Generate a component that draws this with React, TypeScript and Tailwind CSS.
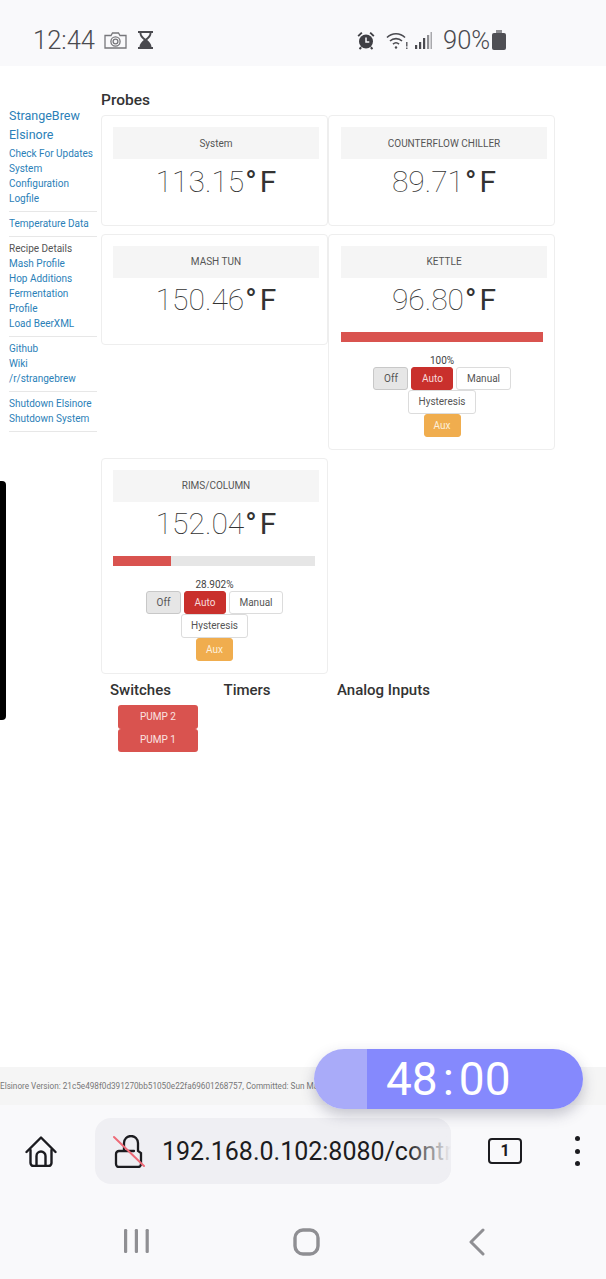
import React from 'react';

const linkClass = 'block text-[#2b7fb8]';

const navGroups = [
  ['Check For Updates', 'System', 'Configuration', 'Logfile'],
  ['Temperature Data'],
  ['Recipe Details', 'Mash Profile', 'Hop Additions', 'Fermentation', 'Profile', 'Load BeerXML'],
  ['Github', 'Wiki', '/r/strangebrew'],
  ['Shutdown Elsinore', 'Shutdown System'],
];

const Sidebar = () => (
  <aside className="w-[88px] ml-[9px] pt-[40px] shrink-0 text-[10px] leading-[15px] whitespace-nowrap">
    <div className="text-[12.5px] leading-[19px] text-[#2b7fb8] mb-[2px]">
      <div>StrangeBrew</div>
      <div>Elsinore</div>
    </div>
    {navGroups.map((group, i) => (
      <div key={i} className={`border-b border-[#e7e7e7] ${i === 0 ? 'pt-0 pb-[4.5px]' : 'py-[4.5px]'}`}>
        {group.map((item) =>
          item === 'Recipe Details' ? (
            <div key={item} className="text-[#555]">{item}</div>
          ) : (
            <a key={item} className={linkClass}>{item}</a>
          )
        )}
      </div>
    ))}
  </aside>
);

const Btn = ({ label, kind }: { label: string; kind: 'off' | 'auto' | 'plain' | 'aux' }) => {
  const styles = {
    off: 'bg-[#e6e6e6] border-[#c8c8c8] text-[#555] w-[35px]',
    auto: 'bg-[#c9302c] border-[#c9302c] text-[#f7dcdc] w-[42px]',
    plain: 'bg-white border-[#dcdcdc] text-[#555] px-[9.5px]',
    aux: 'bg-[#f0ad4e] border-[#f0ad4e] text-[#fdf0dc] w-[37px]',
  };
  return (
    <span className={`h-[23.5px] flex items-center justify-center border rounded-[3px] text-[10px] ${styles[kind]}`}>
      {label}
    </span>
  );
};

const ProbeCard = ({ name, temp, pct, label, right }: { name: string; temp: string; pct?: number; label?: string; right?: boolean }) => (
  <div className={`border border-[#eeeeee] rounded-[4px] pt-[11px] pb-[12px] self-start min-h-[111px] bg-white ${right ? 'pl-[12px] pr-[7px]' : 'pl-[11px] pr-[8px]'}`}>
    <div className="h-[32px] bg-[#f5f5f5] flex items-center justify-center text-[10px] text-[#555]">{name}</div>
    <div className="h-[42px] pt-[3px] flex items-center justify-center text-[30px] text-[#333] leading-none">
      <span className="font-thin">{temp}</span>
      <span className="font-medium ml-[1px]">°</span>
      <span className="font-normal ml-[3px]">F</span>
    </div>
    {pct !== undefined && (
      <div className={`mt-[12px] ${right ? 'w-[202px]' : 'w-[203px]'}`}>
        <div className="w-[202px] h-[10px] bg-[#e6e6e6]">
          <div className="h-full bg-[#d9534f]" style={{ width: `${pct}%` }} />
        </div>
        <div className="mt-[13px] text-center text-[10px] leading-[12px] text-[#444]">{label}</div>
        <div className="flex flex-wrap justify-center gap-x-[3px]">
          <Btn label="Off" kind="off" />
          <Btn label="Auto" kind="auto" />
          <Btn label="Manual" kind="plain" />
          <Btn label="Hysteresis" kind="plain" />
          <div className="w-full flex justify-center">
            <Btn label="Aux" kind="aux" />
          </div>
        </div>
      </div>
    )}
  </div>
);

const Main = () => (
  <main className="ml-[4px] w-[455px] text-[#333]">
    <h3 className="h-[49px] pt-[24px] text-[15.5px] leading-[20px] font-medium">Probes</h3>
    <div className="grid grid-cols-[227px_227px] gap-y-[7.5px]">
      <ProbeCard name="System" temp="113.15" />
      <ProbeCard name="COUNTERFLOW CHILLER" temp="89.71" right />
      <ProbeCard name="MASH TUN" temp="150.46" />
      <ProbeCard name="KETTLE" temp="96.80" pct={100} label="100%" right />
      <ProbeCard name="RIMS/COLUMN" temp="152.04" pct={28.902} label="28.902%" />
    </div>
    <div className="flex pl-[9px] pt-[6px] text-[15px] leading-[20px] font-medium">
      <div className="w-[113.5px]">
        <h4>Switches</h4>
        <div className="ml-[8px] mt-[5px] w-[80px]">
          <div className="h-[23.5px] flex items-center justify-center rounded-[3px] bg-[#d9534f] text-[10px] font-normal text-[#fbe3e2]">PUMP 2</div>
          <div className="h-[23.5px] flex items-center justify-center rounded-[3px] bg-[#d9534f] text-[10px] font-normal text-[#fbe3e2]">PUMP 1</div>
        </div>
      </div>
      <h4 className="w-[113.5px]">Timers</h4>
      <h4>Analog Inputs</h4>
    </div>
  </main>
);

const StatusBar = () => (
  <div className="h-[66px] shrink-0 bg-[#f9f9fb] pl-[33px] pr-[100px] pt-[24px] flex justify-between items-start text-[#4a4a4f]">
    <div className="flex items-center h-[32px]">
      <span className="text-[25.5px] font-light leading-none w-[71px] mt-[1px]">12:44</span>
      <svg width="23" height="17" viewBox="0 0 23 17" fill="none" stroke="#77777b" strokeWidth="1.3">
        <path d="M1 3.500h6L8.500 1h6L16 3.500h6V16H1z" />
        <circle cx="11.500" cy="9.500" r="4.600" />
        <circle cx="11.500" cy="9.500" r="2.400" />
      </svg>
      <svg className="ml-[11px]" width="15" height="18" viewBox="0 0 15 18" fill="#4a4a4f">
        <path d="M0 0h15v2h-1.500c0 3-2 5-4.300 7 2.300 2 4.300 4 4.300 7H15v2H0v-2h1.500c0-3 2-5 4.300-7-2.300-2-4.300-4-4.300-7H0zm3.400 2c0 2.400 1.900 4 4.100 5.800C9.700 6 11.600 4.400 11.600 2z" />
      </svg>
    </div>
    <div className="flex items-center h-[32px]">
      <svg width="18" height="19" viewBox="0 0 18 19" fill="#3f3f44">
        <circle cx="9" cy="10.500" r="7" />
        <path d="M0.500 4.500 4.200 1l1.300 1.300-3.700 3.500zM17.500 4.500 13.800 1l-1.300 1.300 3.700 3.500zM3.200 15.500l1.800 1.400-1.800 1.800-1.300-1.300zM14.800 15.500 13 16.900l1.800 1.800 1.300-1.300z" />
        <path d="M9 6.500v4.500h3.300" stroke="#f9f9fb" strokeWidth="1.500" fill="none" />
      </svg>
      <svg className="ml-[11px]" width="22" height="19" viewBox="0 0 22 19" fill="none" stroke="#4a4a4f" strokeWidth="1.600">
        <path d="M1 6.500C6 1.500 14 1.500 19 6.500" />
        <path d="M4 10c3.200-3.200 8.800-3.200 12 0" />
        <path d="M7 13.200c1.800-1.700 4.200-1.700 6 0" />
        <circle cx="10" cy="16.500" r="1.200" fill="#4a4a4f" stroke="none" />
        <path d="M20.800 11v4.500M20.800 16.500V18" strokeWidth="1.300" />
      </svg>
      <svg className="ml-[7px]" width="17" height="19" viewBox="0 0 17 19" fill="#4a4a4f">
        <rect x="0" y="14" width="2.200" height="4" />
        <rect x="4" y="11" width="2.200" height="7" />
        <rect x="8" y="7" width="2.200" height="11" />
        <rect x="12" y="4" width="2.200" height="14" fill="#8f8f93" />
        <rect x="15.500" y="1" width="1.500" height="17" fill="#a8a8ac" />
      </svg>
      <span className="ml-[11px] w-[45px] text-[25.5px] font-light leading-none mt-[1px]">90%</span>
      <svg className="ml-[4px]" width="14" height="20" viewBox="0 0 14 20" fill="#4f4f54">
        <rect x="4" y="0" width="6" height="3" fill="#8f8f93" />
        <rect x="0" y="3" width="14" height="17" rx="2" />
      </svg>
    </div>
  </div>
);

const BrowserBar = () => (
  <div className="h-[174px] shrink-0 bg-[#f9f9fb]">
    <div className="h-[92px] flex items-start pt-[13px]">
      <div className="w-[95px] shrink-0 h-[66px] flex items-center pl-[25px]">
        <svg width="32" height="31" viewBox="0 0 32 31" fill="none" stroke="#1c1c20" strokeWidth="2.400" strokeLinejoin="round" strokeLinecap="round">
          <path d="M1.500 16 16 1.500 30.500 16" />
          <path d="M5.500 14v13a3 3 0 0 0 3 3h15a3 3 0 0 0 3-3V14" />
          <path d="M11.500 30V20a4.500 4.500 0 0 1 9 0v10" />
        </svg>
      </div>
      <div className="w-[356px] shrink-0 h-[66px] rounded-[16px] bg-[#efeff3] flex items-center pl-[18px] overflow-hidden relative">
        <svg className="shrink-0" width="33" height="33" viewBox="0 0 33 33" fill="none" stroke="#1c1c20" strokeWidth="2.300" strokeLinecap="round">
          <path d="M11 16V8a7 7 0 0 1 14 0v8l3 2v11a3 3 0 0 1-3 3H6a3 3 0 0 1-3-3V19a3 3 0 0 1 3-3h15" />
          <path d="M1 2l30 29" stroke="#ee6b78" strokeWidth="2" />
        </svg>
        <span className="ml-[16px] mt-[1px] text-[25px] whitespace-nowrap text-[#1c1c20] leading-none">192.168.0.102:8080/contr</span>
        <div className="absolute right-0 top-0 h-full w-[44px] bg-gradient-to-r from-[#efeff300] to-[#efeff3]" />
      </div>
      <div className="flex-1 h-[66px] flex items-center pl-[37px]">
        <span className="w-[34px] h-[26px] border-[2.4px] border-[#1c1c20] rounded-[4px] flex items-center justify-center text-[16px] font-bold leading-none text-[#1c1c20]">1</span>
        <div className="ml-[52.5px] flex flex-col gap-[7.5px]">
          <span className="w-[5px] h-[5px] rounded-full bg-[#1c1c20]" />
          <span className="w-[5px] h-[5px] rounded-full bg-[#1c1c20]" />
          <span className="w-[5px] h-[5px] rounded-full bg-[#1c1c20]" />
        </div>
      </div>
    </div>
    <div className="flex items-start pt-[31px] pl-[124px]">
      <svg width="26" height="26" viewBox="0 0 26 26" fill="#8f8f93">
        <rect x="0" y="1" width="3.200" height="24" rx="1.200" />
        <rect x="10.800" y="1" width="3.200" height="24" rx="1.200" />
        <rect x="21.600" y="1" width="3.200" height="24" rx="1.200" />
      </svg>
      <svg className="ml-[143px]" width="28" height="28" viewBox="0 0 28 28" fill="none" stroke="#8f8f93" strokeWidth="3.400">
        <rect x="2" y="2" width="23" height="24" rx="8" />
      </svg>
      <svg className="ml-[147px]" width="18" height="28" viewBox="0 0 18 28" fill="none" stroke="#8f8f93" strokeWidth="3" strokeLinecap="round" strokeLinejoin="round">
        <path d="M15 2 3 14l12 12" />
      </svg>
    </div>
  </div>
);

export default function App() {
  return (
    <div className="relative w-[606px] h-[1279px] overflow-hidden bg-white flex flex-col font-['Roboto',sans-serif]">
      <StatusBar />
      <div className="flex flex-1 min-h-0">
        <Sidebar />
        <Main />
      </div>
      <div className="h-[38px] shrink-0 bg-[#f5f5f5] flex items-center text-[8.2px] text-[#777] whitespace-nowrap">
        Elsinore Version: 21c5e498f0d391270bb51050e22fa69601268757, Committed: Sun Mar 3 2019
      </div>
      <BrowserBar />

      {/* edge panel handle */}
      <div className="absolute left-0 top-[481px] w-[6px] h-[239px] bg-black rounded-r-[4px]" />

      {/* floating timer */}
      <div className="absolute left-[314px] top-[1049px] w-[269px] h-[60px] rounded-full overflow-hidden flex shadow-[0_6px_14px_rgba(60,60,90,0.28)]">
        <div className="w-[53px] bg-[#a9abf9]" />
        <div className="flex-1 bg-[#8589fd] pl-[19px] flex items-center text-[46px] leading-none text-white">
          48<span className="mx-[5px]">:</span>00
        </div>
      </div>
    </div>
  );
}
